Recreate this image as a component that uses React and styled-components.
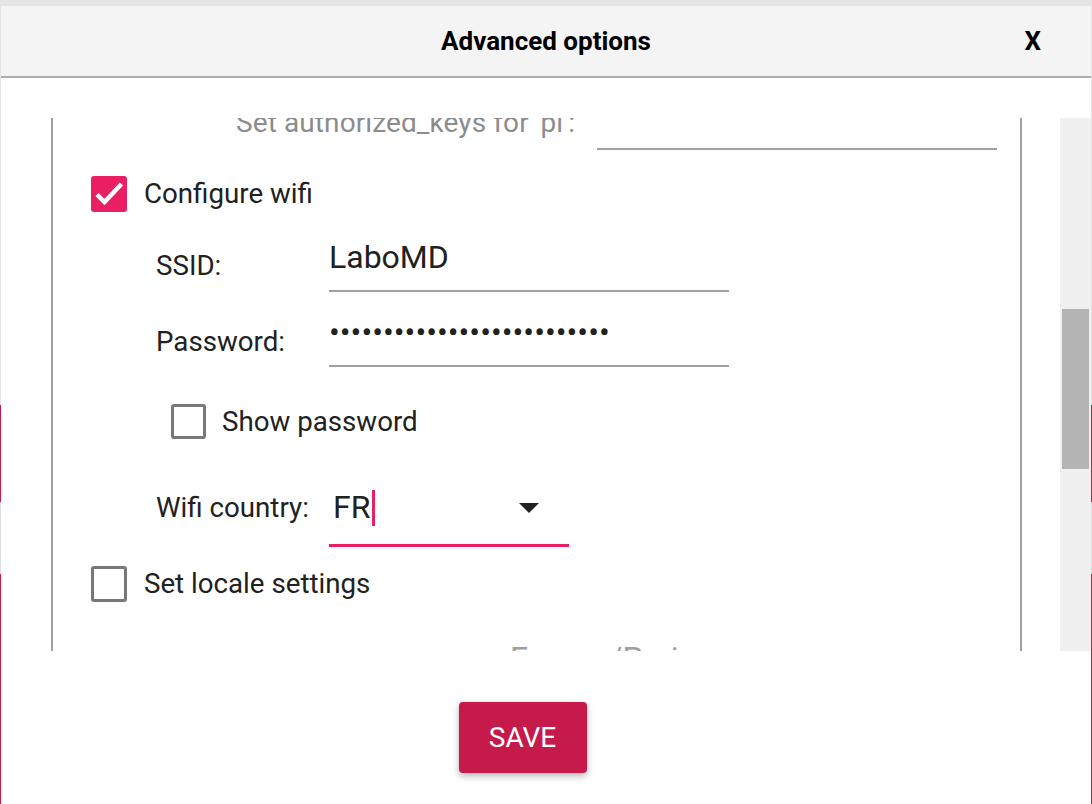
import React from 'react'
import styled, { createGlobalStyle } from 'styled-components'

const GlobalStyle = createGlobalStyle`
  html, body {
    margin: 0;
    padding: 0;
  }
  body {
    font-family: Roboto, 'Noto Sans', sans-serif;
    background: linear-gradient(
      to bottom,
      #e4e4e4 0,
      #e4e4e4 405px,
      #c51a4a 405px,
      #c51a4a 502px,
      #dedede 502px,
      #dedede 574px,
      #c51a4a 574px
    );
    overflow: hidden;
  }
`

const Page = styled.div`
  box-sizing: border-box;
  height: 804px;
  padding: 6px 1px 0 1px;
`

const Dialog = styled.div`
  height: 100%;
  background: #ffffff;
  display: flex;
  flex-direction: column;
`

const Header = styled.header`
  flex-shrink: 0;
  height: 70px;
  background: #f4f4f4;
  border-bottom: 2px solid #adadad;
  display: grid;
  grid-template-columns: 1fr auto 1fr;
  align-items: center;
`

const Title = styled.h1`
  grid-column: 2;
  margin: 0;
  font-size: 26px;
  font-weight: 700;
  line-height: 1;
  color: #000;
`

const Close = styled.span`
  justify-self: end;
  margin-right: 50px;
  font-size: 26px;
  font-weight: 700;
  line-height: 1;
  color: #000;
  cursor: pointer;
`

const Body = styled.div`
  flex: 1;
  display: flex;
  flex-direction: column;
  padding-top: 40px;
`

const ScrollArea = styled.div`
  height: 533px;
  display: flex;
  margin-left: 50px;
`

const Panel = styled.div`
  flex: 1;
  border-left: 2px solid #a0a0a0;
  border-right: 2px solid #a0a0a0;
  overflow: hidden;
`

const Content = styled.div`
  margin-top: -20px;
  display: flex;
  flex-direction: column;
`

const Track = styled.div`
  width: 31px;
  margin-left: 38px;
  background: #f0f0f0;
`

const Thumb = styled.div`
  margin: ${({ top }) => top}px 2px 0 2px;
  height: ${({ size }) => size}px;
  background: #b4b4b4;
`

const KeysRow = styled.div`
  display: grid;
  grid-template-columns: 361px 400px;
  height: 52px;
  padding-left: 183px;
`

const MutedLabel = styled.span`
  margin-top: 11px;
  font-size: 28px;
  line-height: 1;
  color: #8c8c8c;
  letter-spacing: 0.1px;
  white-space: nowrap;
`

const CheckRow = styled.label`
  display: flex;
  align-items: center;
  gap: ${({ gap = 17 }) => gap}px;
  margin-top: ${({ top }) => top}px;
  padding-left: ${({ indent }) => indent}px;
  font-size: 27.7px;
  line-height: 1;
  color: #212121;
`

const Box = styled.span`
  box-sizing: border-box;
  width: ${({ size }) => size}px;
  height: ${({ size }) => size}px;
  border-radius: 3px;
  flex-shrink: 0;
  display: flex;
  align-items: center;
  justify-content: center;
  background: ${({ checked }) => (checked ? '#e91e63' : 'transparent')};
  border: ${({ checked }) => (checked ? 'none' : '3px solid #787878')};
`

const FieldRow = styled.div`
  display: grid;
  grid-template-columns: 173px auto;
  margin-top: ${({ top }) => top}px;
  padding-left: 103px;
`

const Label = styled.span`
  margin-top: ${({ offset }) => offset}px;
  font-size: 27.7px;
  line-height: 1;
  color: #212121;
  white-space: nowrap;
`

const TextField = styled.div`
  box-sizing: border-box;
  width: 400px;
  height: 60px;
  padding-top: 9px;
  border-bottom: 2px solid #a0a0a0;
  font-size: 32px;
  line-height: 1;
  color: #212121;
  white-space: nowrap;
`

const Underline = styled.div`
  box-sizing: border-box;
  width: 400px;
  height: 100%;
  border-bottom: 2px solid #a0a0a0;
`

const Select = styled.div`
  box-sizing: border-box;
  width: 240px;
  height: 67px;
  padding: 10px 30px 0 4px;
  border-bottom: 3px solid #e91e63;
  display: flex;
  align-items: flex-start;
`

const SelectValue = styled.span`
  margin-top: 1px;
  font-size: 32px;
  line-height: 1;
  color: #212121;
`

const Caret = styled.span`
  width: 3px;
  height: 36px;
  margin-left: 2px;
  background: #e91e63;
`

const Arrow = styled.span`
  margin-left: auto;
  margin-top: 13px;
  width: 0;
  height: 0;
  border-left: 10px solid transparent;
  border-right: 10px solid transparent;
  border-top: 10px solid #212121;
`

const CutRow = styled.div`
  margin-top: 40px;
  padding-left: 457px;
  font-size: 32px;
  line-height: 1;
  color: #9e9e9e;
  white-space: nowrap;
`

const Footer = styled.div`
  flex: 1;
  display: flex;
  align-items: center;
  justify-content: center;
  padding: 20px 47px 0 0;
`

const SaveButton = styled.button`
  width: 128px;
  height: 71px;
  border: none;
  border-radius: 4px;
  background: #c51a4a;
  color: #ffffff;
  font-family: Roboto, 'Noto Sans', sans-serif;
  font-size: 28px;
  box-shadow: 0 3px 7px rgba(0, 0, 0, 0.3);
  cursor: pointer;
`

const Check = () => (
  <svg width="36" height="36" viewBox="0 0 36 36">
    <polyline
      points="6,18.5 13.5,26 30.5,8"
      fill="none"
      stroke="#ffffff"
      strokeWidth="4.5"
    />
  </svg>
)

const Checkbox = ({ checked, size = 36 }) => (
  <Box checked={checked} size={size}>
    {checked && <Check />}
  </Box>
)

const App = () => {
  const password = '•'.repeat(26)

  return (
    <>
      <GlobalStyle />
      <Page>
        <Dialog>
          <Header>
            <Title>Advanced options</Title>
            <Close>X</Close>
          </Header>
          <Body>
            <ScrollArea>
              <Panel>
                <Content>
                  <KeysRow>
                    <MutedLabel>Set authorized_keys for 'pi':</MutedLabel>
                    <Underline />
                  </KeysRow>

                  <CheckRow top={26} indent={38}>
                    <Checkbox checked />
                    Configure wifi
                  </CheckRow>

                  <FieldRow top={20}>
                    <Label offset={20}>SSID:</Label>
                    <TextField>LaboMD</TextField>
                  </FieldRow>

                  <FieldRow top={15}>
                    <Label offset={21}>Password:</Label>
                    <TextField>{password}</TextField>
                  </FieldRow>

                  <CheckRow top={37} indent={118} gap={16}>
                    <Checkbox size={35} />
                    Show password
                  </CheckRow>

                  <FieldRow top={41}>
                    <Label offset={14}>Wifi country:</Label>
                    <Select>
                      <SelectValue>FR</SelectValue>
                      <Caret />
                      <Arrow />
                    </Select>
                  </FieldRow>

                  <CheckRow top={19} indent={38}>
                    <Checkbox />
                    Set locale settings
                  </CheckRow>

                  <CutRow>Europe/Paris</CutRow>
                </Content>
              </Panel>
              <Track>
                <Thumb top={191} size={160} />
              </Track>
            </ScrollArea>
            <Footer>
              <SaveButton>SAVE</SaveButton>
            </Footer>
          </Body>
        </Dialog>
      </Page>
    </>
  )
}

export default App
